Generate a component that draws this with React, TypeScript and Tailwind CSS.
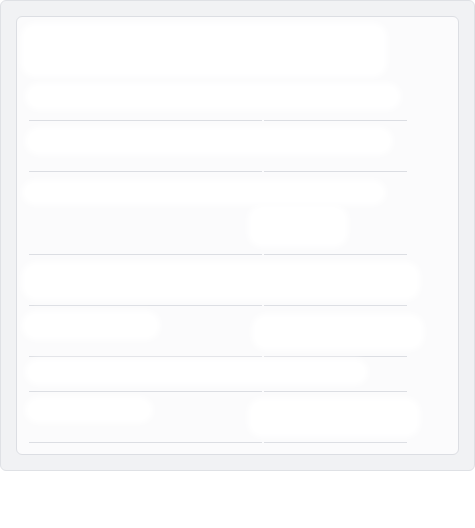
import React from "react";

function Line() {
  return (
    <div className="flex h-px">
      <div className="ml-[12px] w-[233px] bg-[#dcdee3]" />
      <div className="ml-[2px] w-[143px] bg-[#dcdee3]" />
    </div>
  );
}

function Blob({ ml, w, h, mt = 0 }: { ml: number; w: number; h: number; mt?: number }) {
  return (
    <div
      className="rounded-[14px] bg-white blur-[3px]"
      style={{ marginLeft: ml, width: w, height: h, marginTop: mt }}
    />
  );
}

export default function App() {
  return (
    <div className="w-[475px] h-[528px] bg-white" style={{ fontFamily: "Inter, sans-serif" }}>
      <div className="w-[475px] h-[471px] bg-[#f1f2f4] border border-[#dfe1e5] rounded-[6px] p-[15px]">
        <div className="w-[443px] h-[439px] border border-[#dcdee3] rounded-[6px] bg-[#fbfbfc] overflow-hidden">
          <div className="h-[103px] flex flex-col">
            <Blob ml={4} w={366} h={54} mt={6} />
            <Blob ml={8} w={376} h={27} mt={6} />
          </div>
          <Line />
          <div className="h-[50px] flex flex-col">
            <Blob ml={8} w={368} h={28} mt={6} />
          </div>
          <Line />
          <div className="h-[82px] flex flex-col">
            <Blob ml={5} w={364} h={25} mt={8} />
            <Blob ml={231} w={100} h={42} mt={0} />
          </div>
          <Line />
          <div className="h-[50px] flex flex-col">
            <Blob ml={5} w={398} h={38} mt={7} />
          </div>
          <Line />
          <div className="h-[50px] flex">
            <Blob ml={5} w={138} h={29} mt={5} />
            <Blob ml={92} w={172} h={36} mt={8} />
          </div>
          <Line />
          <div className="h-[34px] flex flex-col">
            <Blob ml={8} w={343} h={26} mt={2} />
          </div>
          <Line />
          <div className="h-[50px] flex">
            <Blob ml={8} w={128} h={26} mt={5} />
            <Blob ml={95} w={172} h={39} mt={6} />
          </div>
          <Line />
        </div>
      </div>
    </div>
  );
}
